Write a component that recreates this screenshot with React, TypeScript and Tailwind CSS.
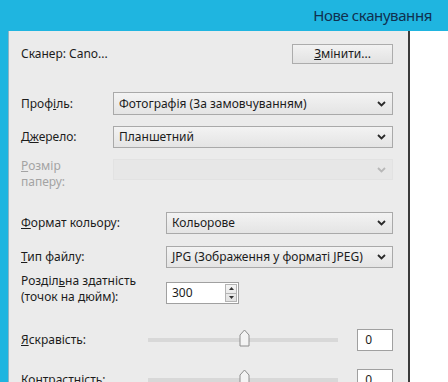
import React from 'react';

const font = { fontFamily: '"Noto Sans", "Open Sans", sans-serif' };

function Chevron({ muted }: { muted?: boolean }) {
  return (
    <svg width="9" height="6" viewBox="0 0 9 6" className="shrink-0">
      <polyline
        points="1,1 4.5,4.5 8,1"
        fill="none"
        stroke={muted ? '#b8b8b8' : '#2a2a2a'}
        strokeWidth="1.8"
      />
    </svg>
  );
}

function Select({ value, className = '', disabled }: { value?: string; className?: string; disabled?: boolean }) {
  return (
    <div
      className={`flex items-center justify-between pl-[5px] pr-[6px] text-[12px] ${
        disabled
          ? 'border border-[#e2e2e2] bg-[#e7e7e7]'
          : 'border border-[#a9a9a9] bg-gradient-to-b from-[#f3f3f3] to-[#e4e4e4] text-[#1c1c1c]'
      } ${className}`}
    >
      <span>{value}</span>
      <Chevron muted={disabled} />
    </div>
  );
}

function Thumb() {
  return (
    <svg width="11" height="18" viewBox="0 0 11 18" className="absolute top-[-9px]" style={{ left: 91 }}>
      <path d="M1 17 V6 L5.5 1 L10 6 V17 Z" fill="#f3f3f3" stroke="#8d8d8d" strokeWidth="1" />
    </svg>
  );
}

function SliderRow({ label }: { label: React.ReactNode }) {
  return (
    <div className="flex h-[22px] items-center">
      <div className="w-[128px] text-[12px] text-[#1c1c1c]">{label}</div>
      <div className="relative h-[4px] w-[191px] bg-[#d8d8d8]">
        <Thumb />
      </div>
      <div className="ml-[19px] flex h-[22px] w-[36px] items-center border border-[#a0a0a0] bg-white pl-[7px] text-[12px] text-[#1c1c1c]">
        0
      </div>
    </div>
  );
}

export default function App() {
  return (
    <div className="h-[382px] w-[448px] overflow-hidden bg-[#1fb5e0]" style={font}>
      {/* Title bar */}
      <div className="flex h-[31px] items-center justify-end pr-[16px]">
        <span className="text-[15px] leading-none tracking-[-0.4px] text-[#10304f]">Нове сканування</span>
      </div>

      <div className="flex h-[351px]">
        <div className="w-[8px]" />
        {/* Settings panel */}
        <div className="flex w-[400px] flex-col border-l border-[#8fb4c4] bg-[#ebebeb] pl-[12px] pr-[15px] text-[#1c1c1c]">
          <div className="mt-[13px] flex h-[20px] items-center justify-between">
            <span className="text-[12px]">Сканер: Cano...</span>
            <div className="flex h-[20px] w-[101px] items-center justify-center border border-[#acacac] bg-gradient-to-b from-[#f2f2f2] to-[#e2e2e2] text-[12px]">
              <span><u>З</u>мінити...</span>
            </div>
          </div>

          <div className="mt-[16px] h-px bg-[#a3a3a3]" />

          <div className="mt-[12px] flex h-[23px] items-center">
            <span className="w-[92px] text-[12px]">Проф<u>і</u>ль:</span>
            <Select value="Фотографія (За замовчуванням)" className="h-[23px] w-[280px]" />
          </div>

          <div className="mt-[11px] flex h-[22px] items-center">
            <span className="w-[92px] text-[12px]">Д<u>ж</u>ерело:</span>
            <Select value="Планшетний" className="h-[22px] w-[280px]" />
          </div>

          <div className="mt-[11px] flex h-[30px] items-start">
            <span className="-mt-px w-[92px] text-[12px] leading-[16px] text-[#a3a3a3]">
              <u>Р</u>озмір
              <br />
              паперу:
            </span>
            <Select disabled className="h-[21px] w-[280px]" />
          </div>

          <div className="mt-[7px] h-px bg-[#a3a3a3]" />

          <div className="mt-[16px] flex h-[22px] items-center">
            <span className="w-[145px] text-[12px]"><u>Ф</u>ормат кольору:</span>
            <Select value="Кольорове" className="h-[22px] w-[227px]" />
          </div>

          <div className="mt-[12px] flex h-[22px] items-center">
            <span className="w-[145px] text-[12px]"><u>Т</u>ип файлу:</span>
            <Select value="JPG (Зображення у форматі JPEG)" className="h-[22px] w-[227px]" />
          </div>

          <div className="mt-[6px] flex h-[30px] items-start">
            <span className="-mt-px w-[145px] text-[12px] leading-[16px]">
              Розділ<u>ь</u>на здатність
              <br />
              (точок на дюйм):
            </span>
            <div className="mt-[8px] flex h-[22px] w-[73px] border border-[#a0a0a0] bg-white">
              <span className="flex flex-1 items-center pl-[5px] text-[12px]">300</span>
              <div className="my-px mr-px flex w-[12px] flex-col border border-[#b4b4b4] bg-gradient-to-b from-[#f4f4f4] to-[#e2e2e2]">
                <div className="flex flex-1 items-center justify-center border-b border-[#b4b4b4]">
                  <svg width="5" height="3" viewBox="0 0 5 3"><polygon points="0,3 2.5,0 5,3" fill="#333" /></svg>
                </div>
                <div className="flex flex-1 items-center justify-center">
                  <svg width="5" height="3" viewBox="0 0 5 3"><polygon points="0,0 2.5,3 5,0" fill="#333" /></svg>
                </div>
              </div>
            </div>
          </div>

          <div className="mt-[13px] h-px bg-[#a3a3a3]" />

          <div className="mt-[12px]">
            <SliderRow label={<><u>Я</u>скравість:</>} />
          </div>
          <div className="mt-[18px]">
            <SliderRow label={<><u>К</u>онтрастність:</>} />
          </div>
        </div>

        {/* Preview area */}
        <div className="flex-1 border-l-2 border-[#3a3a3a] bg-white" />
      </div>
    </div>
  );
}
